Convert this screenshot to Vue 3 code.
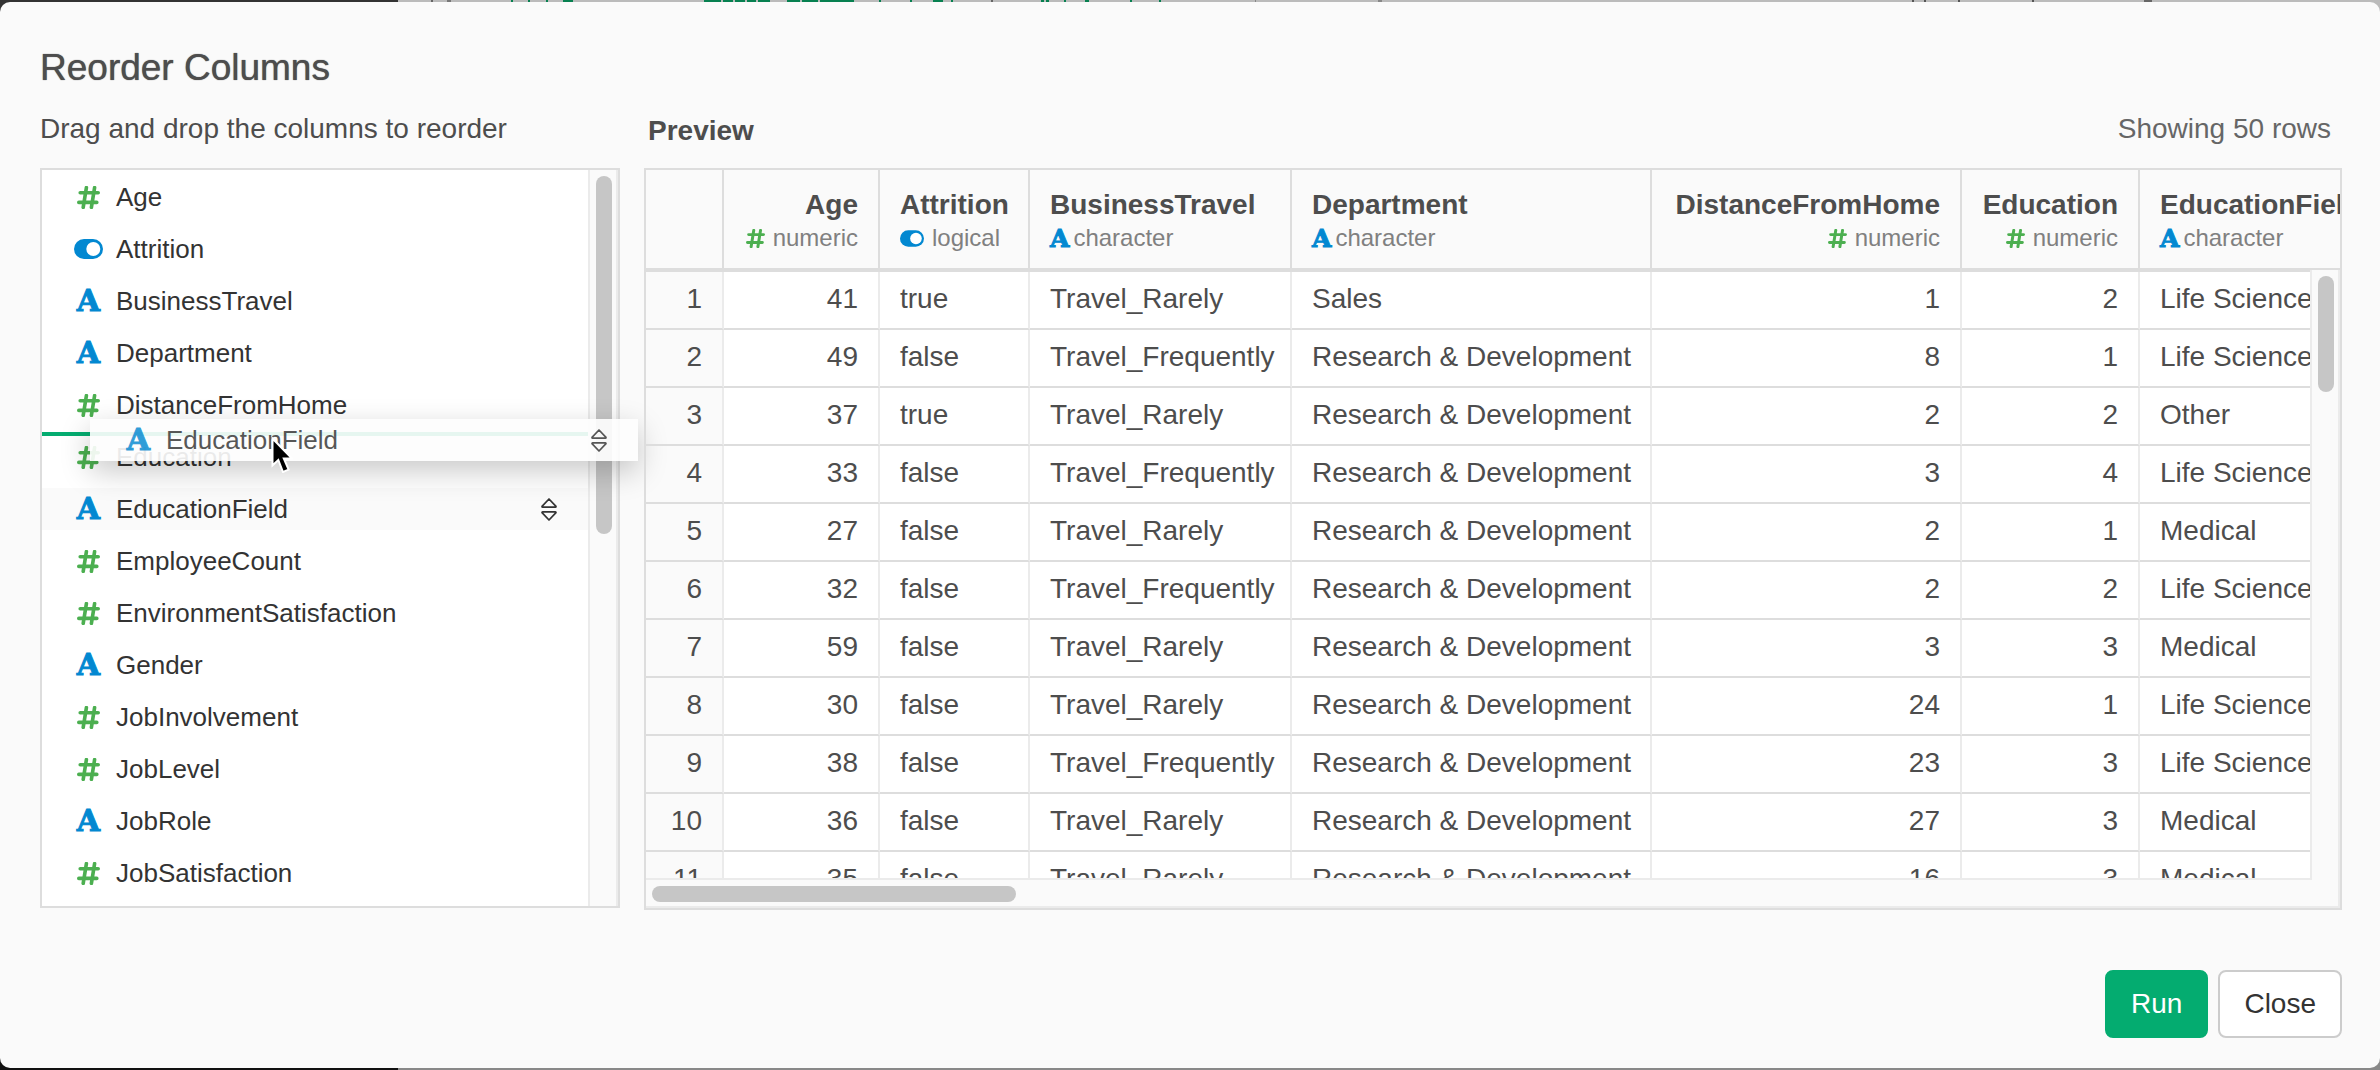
<script setup>
import { h } from 'vue'

const columns = [
  { name: 'Age', type: 'numeric' },
  { name: 'Attrition', type: 'logical' },
  { name: 'BusinessTravel', type: 'character' },
  { name: 'Department', type: 'character' },
  { name: 'DistanceFromHome', type: 'numeric' },
  { name: 'Education', type: 'numeric', dropTarget: true },
  { name: 'EducationField', type: 'character', active: true },
  { name: 'EmployeeCount', type: 'numeric' },
  { name: 'EnvironmentSatisfaction', type: 'numeric' },
  { name: 'Gender', type: 'character' },
  { name: 'JobInvolvement', type: 'numeric' },
  { name: 'JobLevel', type: 'numeric' },
  { name: 'JobRole', type: 'character' },
  { name: 'JobSatisfaction', type: 'numeric' },
]

const previewColumns = columns.slice(0, 7)
const widths = [156, 150, 262, 360, 310, 178, 240]

const RD = 'Research & Development'
const rows = [
  [41, 'true', 'Travel_Rarely', 'Sales', 1, 2, 'Life Sciences'],
  [49, 'false', 'Travel_Frequently', RD, 8, 1, 'Life Sciences'],
  [37, 'true', 'Travel_Rarely', RD, 2, 2, 'Other'],
  [33, 'false', 'Travel_Frequently', RD, 3, 4, 'Life Sciences'],
  [27, 'false', 'Travel_Rarely', RD, 2, 1, 'Medical'],
  [32, 'false', 'Travel_Frequently', RD, 2, 2, 'Life Sciences'],
  [59, 'false', 'Travel_Rarely', RD, 3, 3, 'Medical'],
  [30, 'false', 'Travel_Rarely', RD, 24, 1, 'Life Sciences'],
  [38, 'false', 'Travel_Frequently', RD, 23, 3, 'Life Sciences'],
  [36, 'false', 'Travel_Rarely', RD, 27, 3, 'Medical'],
  [35, 'false', 'Travel_Rarely', RD, 16, 3, 'Medical'],
]

const TypeIcon = ({ type, size }) => {
  const small = size === 'small'
  if (type === 'character') {
    return h('span', { 'aria-hidden': 'true', style: {
      fontFamily: '"DejaVu Serif", serif', fontWeight: 700, color: '#0288d1',
      fontSize: (small ? 25 : 30) + 'px', lineHeight: '1', WebkitTextStroke: '1px #0288d1',
    } }, 'A')
  }
  if (type === 'logical') {
    return h('svg', { width: small ? 24 : 29, height: small ? 17 : 20, viewBox: '0 0 29 20', 'aria-hidden': 'true' }, [
      h('rect', { width: 29, height: 20, rx: 10, fill: '#0288d1' }),
      h('circle', { cx: 19.3, cy: 10, r: 7, fill: '#fff' }),
    ])
  }
  return h('svg', { width: small ? 19 : 23, height: small ? 19 : 23, viewBox: '0 0 23 23', 'aria-hidden': 'true' },
    h('path', {
      d: 'M9.4 1.6L6.2 21.4M17.6 1.6L14.4 21.4M3.2 6.8H21.2M1.8 16.4H19.8',
      fill: 'none', stroke: '#4caf50', 'stroke-width': 3.6, 'stroke-linecap': 'round',
    }))
}

const SortIcon = () => h('svg', { width: 16, height: 23, viewBox: '0 0 16 23', 'aria-hidden': 'true' },
  h('path', {
    d: 'M8 1L15 8.4Q15 9.2 14.4 9.2H1.6Q1 9.2 1 8.4ZM8 22L15 14.6Q15 13.8 14.4 13.8H1.6Q1 13.8 1 14.6Z',
    fill: 'none', stroke: '#333', 'stroke-width': 1.7, 'stroke-linejoin': 'round',
  }))

// x position, width and colour of the page edges that show above the dialog
const edgeMarks = [
  [431, 2, '#666'], [447, 4, '#777'], [511, 2, '#078050'], [528, 2, '#078050'], [546, 2, '#078050'],
  [563, 10, '#078050'], [704, 17, '#078050'], [723, 10, '#078050'], [735, 10, '#078050'],
  [747, 9, '#078050'], [758, 12, '#078050'], [787, 13, '#078050'], [802, 16, '#078050'],
  [820, 34, '#078050'], [879, 2, '#078050'], [910, 2, '#078050'], [933, 10, '#078050'],
  [951, 2, '#078050'], [991, 2, '#666'], [1041, 3, '#078050'], [1046, 3, '#078050'],
  [1064, 2, '#078050'], [1085, 4, '#078050'], [1130, 2, '#078050'], [1159, 2, '#078050'],
  [1255, 1, '#888'], [1378, 4, '#888'], [1912, 2, '#555'], [1924, 2, '#555'], [1958, 2, '#555'],
  [2032, 2, '#555'], [2144, 8, '#666'],
]
</script>

<template>
  <div class="page">
    <svg class="edge" height="2" aria-hidden="true">
      <rect v-for="(m, i) in edgeMarks" :key="i" :x="m[0]" y="0" :width="m[1]" height="2" :fill="m[2]" />
    </svg>
    <main class="dialog" role="dialog" aria-labelledby="dialog-title">
      <h1 id="dialog-title">Reorder Columns</h1>
      <div class="panels">
        <section class="columns">
          <p class="caption">Drag and drop the columns to reorder</p>
          <div class="list-area">
            <div class="list-box">
              <ul>
                <li
                  v-for="c in columns"
                  :key="c.name"
                  class="item"
                  :class="{ active: c.active, target: c.dropTarget }"
                >
                  <span class="icon"><TypeIcon :type="c.type" /></span>
                  <span class="name">{{ c.name }}</span>
                  <SortIcon v-if="c.active" />
                </li>
              </ul>
              <div class="track"><div class="thumb"></div></div>
            </div>
            <div class="item ghost">
              <span class="icon"><TypeIcon type="character" /></span>
              <span class="name">EducationField</span>
              <SortIcon />
            </div>
            <svg class="cursor" width="22" height="37" viewBox="0 0 22 37" aria-hidden="true">
              <path
                d="M1.500 2.500V29.500L7.300 24L12 36L17.600 33.600L12.800 22.500H21Z"
                fill="#000"
                stroke="#fff"
                stroke-width="2"
              />
            </svg>
          </div>
        </section>

        <section class="preview">
          <div class="preview-head">
            <h2>Preview</h2>
            <span class="count">Showing 50 rows</span>
          </div>
          <div class="table-box">
            <table>
              <colgroup>
                <col class="num-col" />
                <col v-for="(w, i) in widths" :key="i" :style="{ width: w + 'px' }" />
              </colgroup>
              <thead>
                <tr>
                  <th></th>
                  <th v-for="c in previewColumns" :key="c.name" :class="c.type" scope="col">
                    <div class="th-name">{{ c.name }}</div>
                    <div class="th-type"><TypeIcon :type="c.type" size="small" /><span>{{ c.type }}</span></div>
                  </th>
                </tr>
              </thead>
              <tbody>
                <tr v-for="(r, i) in rows" :key="i">
                  <th scope="row">{{ i + 1 }}</th>
                  <td v-for="(v, j) in r" :key="j" :class="previewColumns[j].type">{{ v }}</td>
                </tr>
              </tbody>
            </table>
            <div class="v-track"><div class="thumb"></div></div>
            <div class="h-track"><div class="thumb"></div></div>
            <div class="corner"></div>
          </div>
        </section>
      </div>
      <footer>
        <button type="button" class="run">Run</button>
        <button type="button" class="close">Close</button>
      </footer>
    </main>
  </div>
</template>

<style>
body {
  margin: 0;
}
</style>

<style scoped>
.page {
  box-sizing: border-box;
  display: flex;
  flex-direction: column;
  height: 100vh;
  padding-bottom: 2px;
  overflow: hidden;
  font-family: "Liberation Sans", Arial, sans-serif;
  color: #4d4d4d;
  background:
    linear-gradient(90deg, #333 398px, #bbb 398px) top / 100% 50% no-repeat,
    linear-gradient(90deg, #111 398px, #888 398px) bottom / 100% 50% no-repeat;
}
.edge {
  flex: none;
  display: block;
  width: 100%;
}
.dialog {
  box-sizing: border-box;
  flex: 1;
  min-height: 0;
  display: flex;
  flex-direction: column;
  padding: 46px 38px 30px 40px;
  background: #fafafa;
  border-radius: 10px;
}
h1 {
  margin: 0;
  font-size: 37px;
  font-weight: 400;
  line-height: 40px;
  text-shadow: 0 0 1px #4d4d4d;
}
.panels {
  flex: 1;
  min-height: 0;
  display: flex;
  gap: 24px;
  padding: 20px 0 60px;
}
.columns {
  flex: 0 0 580px;
  display: flex;
  flex-direction: column;
}
.caption,
h2,
.count {
  margin: 0;
  font-size: 28px;
  line-height: 42px;
}
.list-area {
  position: relative;
  flex: 1;
  min-height: 0;
  display: flex;
  margin: 18px 0 2px;
}
.list-box {
  box-sizing: border-box;
  flex: 1;
  display: flex;
  border: 2px solid #ddd;
  background: #fff;
  overflow: hidden;
}
ul {
  flex: 1;
  display: flex;
  flex-direction: column;
  gap: 10px;
  margin: 0;
  padding: 6px 0 0;
  list-style: none;
}
.item {
  position: relative;
  box-sizing: border-box;
  flex: none;
  display: flex;
  align-items: center;
  height: 42px;
  padding: 0 31px;
  font-size: 26px;
  line-height: 42px;
  color: #333;
}
.icon {
  flex: none;
  display: flex;
  justify-content: center;
  align-items: center;
  width: 31px;
  margin-right: 12px;
}
.name {
  flex: 1;
}
.active {
  background: #fafafa;
}
.target::before {
  content: "";
  position: absolute;
  left: 0;
  right: 0;
  top: -4px;
  height: 4px;
  background: #04ac70;
}
.track {
  flex: none;
  box-sizing: border-box;
  width: 30px;
  padding: 6px;
  border: solid #ebebeb;
  border-width: 0 2px;
  background: #fafafa;
}
.thumb {
  border-radius: 8px;
  background: #c6c6c6;
}
.track .thumb {
  width: 16px;
  height: 358px;
}
.ghost {
  position: absolute;
  left: 50px;
  top: 251px;
  width: calc(100% - 32px);
  padding-left: 33px;
  background: rgba(253, 253, 253, 0.91);
  box-shadow: 0 10px 30px rgba(0, 0, 0, 0.22);
}
.ghost > * {
  opacity: 0.82;
}
.cursor {
  position: absolute;
  left: 231px;
  top: 268px;
}
.preview {
  flex: 1;
  min-width: 0;
  display: flex;
  flex-direction: column;
}
.preview-head {
  display: flex;
  justify-content: space-between;
  height: 42px;
  padding: 0 11px 0 4px;
}
h2 {
  padding-top: 2px;
}
.count {
  color: #666;
}
.table-box {
  position: relative;
  flex: 1;
  min-height: 0;
  margin-top: 18px;
  border: 2px solid #ddd;
  overflow: hidden;
}
table {
  table-layout: fixed;
  width: 1734px;
  border-collapse: separate;
  border-spacing: 0;
  font-size: 28px;
}
.num-col {
  width: 78px;
}
th,
td {
  box-sizing: border-box;
  padding: 0 20px;
  text-align: left;
  white-space: nowrap;
}
thead th {
  height: 102px;
  padding-top: 18px;
  vertical-align: top;
  border-right: 2px solid #ddd;
  border-bottom: 4px solid #ddd;
}
.th-name {
  line-height: 34px;
}
.th-type {
  display: flex;
  align-items: center;
  gap: 8px;
  height: 32px;
  font-size: 24px;
  font-weight: 400;
  line-height: 32px;
  color: #808080;
}
.character .th-type {
  gap: 4px;
}
.numeric {
  text-align: right;
}
.numeric .th-type {
  justify-content: flex-end;
}
tbody th,
tbody td {
  height: 58px;
  padding-bottom: 2px;
  line-height: 54px;
  border-right: 2px solid #ebebeb;
  border-bottom: 2px solid #ddd;
}
tbody td {
  background: #fff;
}
tbody th {
  font-weight: 400;
  text-align: right;
}
.v-track,
.h-track,
.corner {
  position: absolute;
  box-sizing: border-box;
  background: #fafafa;
}
.v-track {
  top: 100px;
  right: 0;
  bottom: 28px;
  width: 30px;
  padding: 6px;
  border: solid #ebebeb;
  border-width: 0 2px;
}
.v-track .thumb {
  width: 16px;
  height: 116px;
}
.h-track {
  left: 0;
  right: 28px;
  bottom: 0;
  height: 30px;
  padding: 6px;
  border: solid #ebebeb;
  border-width: 2px 0;
}
.h-track .thumb {
  width: 364px;
  height: 16px;
}
.corner {
  right: 0;
  bottom: 0;
  width: 28px;
  height: 28px;
  border: solid #ebebeb;
  border-width: 0 2px 2px 0;
}
footer {
  display: flex;
  justify-content: flex-end;
  gap: 10px;
}
button {
  height: 68px;
  padding: 0 24px;
  border: 2px solid #ccc;
  border-radius: 8px;
  background: #fff;
  font-family: inherit;
  font-size: 28px;
  color: #333;
}
.run {
  border-color: #04ac70;
  background: #04ac70;
  color: #fff;
}
</style>
